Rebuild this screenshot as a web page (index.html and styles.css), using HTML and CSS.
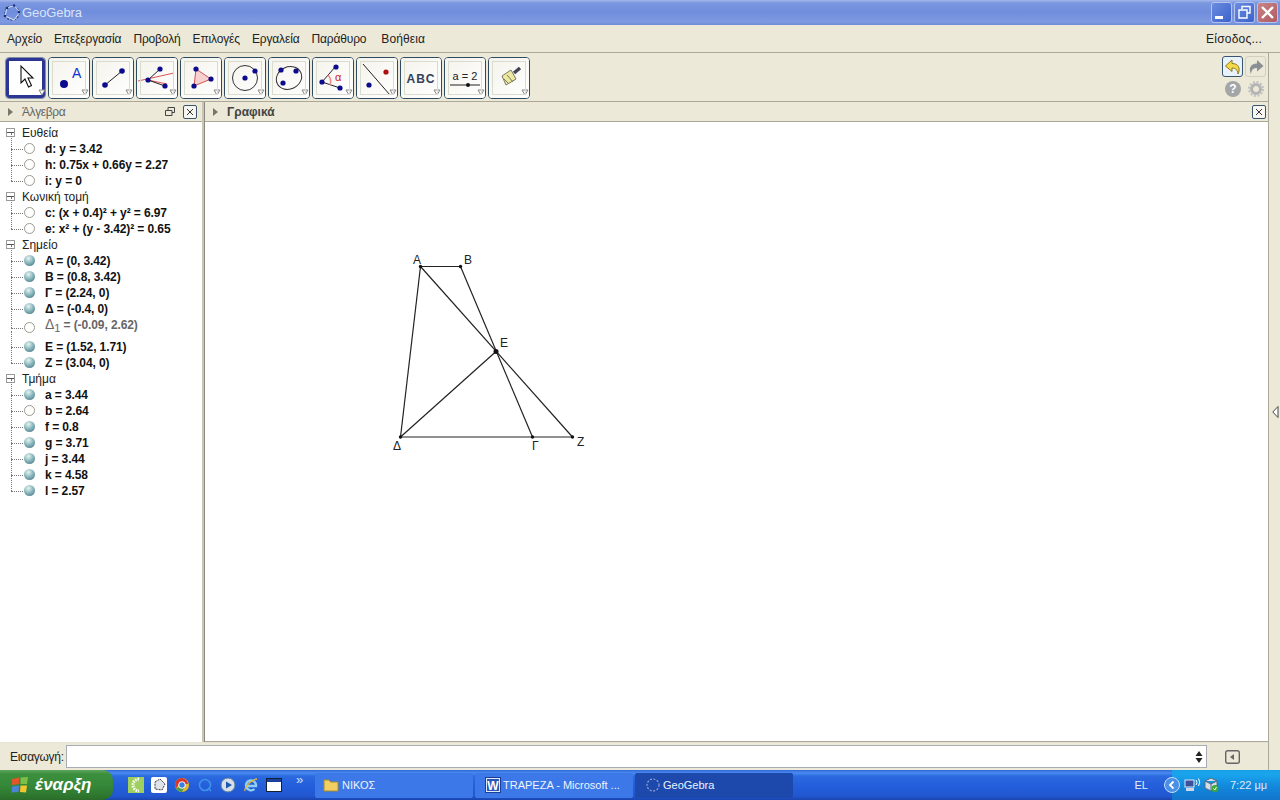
FILE: index.html
```html
<!DOCTYPE html>
<html lang="el">
<head>
<meta charset="utf-8">
<title>GeoGebra</title>
<link rel="stylesheet" href="styles.css">
</head>
<body>
<div class="window">
  <header class="titlebar">
    <svg class="applogo" width="20" height="20" viewBox="0 0 20 20"><circle cx="10" cy="10" r="7" fill="none" stroke="#2a3a80" stroke-width="1.100" stroke-dasharray="2 1.500"/><path d="M5 5 12 2.500 18 9 12 17 3 13Z" fill="none" stroke="#dfe6f7" stroke-width="1"/><circle cx="5" cy="5" r="1.300" fill="#1b2f7c"/><circle cx="12" cy="2.500" r="1.200" fill="#1b2f7c"/><circle cx="17" cy="9" r="1.300" fill="#1b2f7c"/><circle cx="3" cy="13" r="1.300" fill="#1b2f7c"/></svg>
    <span class="apptitle">GeoGebra</span>
    <div class="winbtns">
      <span class="winbtn"><svg width="21" height="21" viewBox="0 0 21 21"><rect x="4" y="14" width="8" height="3" fill="#fff"/></svg></span>
      <span class="winbtn"><svg width="21" height="21" viewBox="0 0 21 21"><path d="M8 7V4.500H16V11H13M5 8H13V16H5Z" fill="none" stroke="#fff" stroke-width="1.400"/></svg></span>
      <span class="winbtn close"><svg width="21" height="21" viewBox="0 0 21 21"><path d="M5 5 16 16M16 5 5 16" stroke="#fff" stroke-width="2.400"/></svg></span>
    </div>
  </header>
  <nav class="menubar">
    <span>Αρχείο</span><span>Επεξεργασία</span><span>Προβολή</span><span>Επιλογές</span><span>Εργαλεία</span><span>Παράθυρο</span><span class="helpmenu">Βοήθεια</span>
    <span class="signin">Είσοδος...</span>
  </nav>
  <div class="body">
    <div class="main">
      <div class="toolbar">
        <div class="tools">
          <div class="tool selected"><svg width="40" height="40" viewBox="0 0 40 40"><path d="M15 8V25L19 21 22.500 29 25.500 27.500 22 20 27 20Z" fill="#fff" stroke="#111" stroke-width="1.100"/><path d="M33 32H39L36 37Z" fill="#fff" stroke="#888"/></svg></div>
          <div class="tool"><svg width="40" height="40" viewBox="0 0 40 40"><circle cx="15" cy="26" r="4" fill="#0b0b8c"/><text x="23" y="20" class="iconletter">A</text><path d="M33 32H39L36 37Z" fill="#fff" stroke="#888"/></svg></div>
          <div class="tool"><svg width="40" height="40" viewBox="0 0 40 40"><path d="M12 27 29 13" stroke="#222"/><circle cx="12" cy="27" r="2.800" fill="#0b0b8c"/><circle cx="29" cy="13" r="2.800" fill="#0b0b8c"/><path d="M33 32H39L36 37Z" fill="#fff" stroke="#888"/></svg></div>
          <div class="tool"><svg width="40" height="40" viewBox="0 0 40 40"><path d="M1 23 37 15M11 22 30 26" stroke="#d55" /><path d="M11 22 23 11M11 22 28 28" stroke="#222"/><circle cx="23" cy="11" r="2.600" fill="#0b0b8c"/><circle cx="11" cy="22" r="2.600" fill="#0b0b8c"/><circle cx="28" cy="28" r="2.600" fill="#0b0b8c"/><path d="M33 32H39L36 37Z" fill="#fff" stroke="#888"/></svg></div>
          <div class="tool"><svg width="40" height="40" viewBox="0 0 40 40"><path d="M15 11 30 21 13 28Z" fill="#f8d0d0" stroke="#c55"/><circle cx="15" cy="11" r="2.600" fill="#0b0b8c"/><circle cx="30" cy="21" r="2.600" fill="#0b0b8c"/><circle cx="13" cy="28" r="2.600" fill="#0b0b8c"/><path d="M33 32H39L36 37Z" fill="#fff" stroke="#888"/></svg></div>
          <div class="tool"><svg width="40" height="40" viewBox="0 0 40 40"><circle cx="20" cy="20" r="12.500" fill="none" stroke="#333"/><circle cx="20" cy="20" r="2.600" fill="#0b0b8c"/><circle cx="30" cy="13" r="2.600" fill="#0b0b8c"/><path d="M33 32H39L36 37Z" fill="#fff" stroke="#888"/></svg></div>
          <div class="tool"><svg width="40" height="40" viewBox="0 0 40 40"><ellipse cx="20" cy="20" rx="13" ry="11" fill="none" stroke="#333" transform="rotate(-25 20 20)"/><circle cx="12" cy="12" r="2.600" fill="#0b0b8c"/><circle cx="27" cy="13" r="2.600" fill="#0b0b8c"/><circle cx="14" cy="25" r="2.600" fill="#0b0b8c"/><path d="M33 32H39L36 37Z" fill="#fff" stroke="#888"/></svg></div>
          <div class="tool"><svg width="40" height="40" viewBox="0 0 40 40"><path d="M9 24 23 8M9 24 27 30" stroke="#222"/><path d="M15 17A10 10 0 0 1 17 27" fill="none" stroke="#e88" stroke-width="1.500"/><circle cx="23" cy="9" r="2.600" fill="#0b0b8c"/><circle cx="9" cy="24" r="2.600" fill="#0b0b8c"/><circle cx="27" cy="30" r="2.600" fill="#0b0b8c"/><text x="22" y="23" class="iconalpha">α</text><path d="M33 32H39L36 37Z" fill="#fff" stroke="#888"/></svg></div>
          <div class="tool"><svg width="40" height="40" viewBox="0 0 40 40"><path d="M6 6 33 37" stroke="#222"/><circle cx="29" cy="14" r="2.600" fill="#b00d0d"/><circle cx="12" cy="27" r="2.600" fill="#0b0b8c"/><path d="M33 32H39L36 37Z" fill="#fff" stroke="#888"/></svg></div>
          <div class="tool"><svg width="40" height="40" viewBox="0 0 40 40"><text x="20" y="25" class="iconabc">ABC</text><path d="M33 32H39L36 37Z" fill="#fff" stroke="#888"/></svg></div>
          <div class="tool"><svg width="40" height="40" viewBox="0 0 40 40"><text x="20" y="22" class="iconeq">a = 2</text><path d="M5 27H35" stroke="#222"/><circle cx="23" cy="27" r="2" fill="#111"/><path d="M33 32H39L36 37Z" fill="#fff" stroke="#888"/></svg></div>
          <div class="tool"><svg width="40" height="40" viewBox="0 0 40 40"><path d="M13 18 22 12 27 21 17 27Z" fill="#efe9a0" stroke="#776"/><path d="M25 15 31 10" stroke="#445" stroke-width="3.500"/><path d="M15 21 20 26M18 17 24 24" stroke="#776"/><path d="M33 32H39L36 37Z" fill="#fff" stroke="#888"/></svg></div>
        </div>
        <div class="hist">
          <div class="histrow">
            <span class="histbtn active"><svg width="18" height="18" viewBox="0 0 18 18"><path d="M8 2 1.500 8 8 13.500V10C11.500 10 13.500 11.500 14 16 16.500 11 15 5.500 8 5.500Z" fill="#f5d94a" stroke="#8a7a18"/></svg></span>
            <span class="histbtn"><svg width="18" height="18" viewBox="0 0 18 18"><path d="M10 2 16.500 8 10 13.500V10C6.500 10 4.500 11.500 4 16 1.500 11 3 5.500 10 5.500Z" fill="#8a8f93"/></svg></span>
          </div>
          <div class="histrow lower">
            <svg width="16" height="16" viewBox="0 0 16 16"><circle cx="8" cy="8" r="8" fill="#a3a5a6"/><text x="8" y="12" class="helpq">?</text></svg>
            <svg width="16" height="16" viewBox="0 0 16 16"><circle cx="8" cy="8" r="4.500" fill="none" stroke="#b4b4b4" stroke-width="3"/><circle cx="8" cy="8" r="7" fill="none" stroke="#c0c0c0" stroke-width="2" stroke-dasharray="2 1.700"/></svg>
          </div>
        </div>
      </div>
      <div class="panels">
        <section class="algebra">
          <div class="panelhead">
            <span class="tri"></span><span class="algtitle">Άλγεβρα</span>
            <svg class="detach" width="10" height="10" viewBox="0 0 10 10"><path d="M3 3V.5H9.500V5.500H7M.5 3.500H7V8.500H.5Z" fill="none" stroke="#444"/></svg>
            <span class="closebox"><svg width="14" height="14" viewBox="0 0 14 14"><path d="M4 4 10 10M10 4 4 10" stroke="#333"/></svg></span>
          </div>
          <div class="tree">
            <div class="group">
              <div class="grouphead"><span class="minus"></span>Ευθεία</div>
              <div class="row"><span class="ball off"></span>d: y = 3.42</div>
              <div class="row"><span class="ball off"></span>h: 0.75x + 0.66y = 2.27</div>
              <div class="row"><span class="ball off"></span>i: y = 0</div>
            </div>
            <div class="group">
              <div class="grouphead"><span class="minus"></span>Κωνική τομή</div>
              <div class="row"><span class="ball off"></span>c: (x + 0.4)² + y² = 6.97</div>
              <div class="row"><span class="ball off"></span>e: x² + (y - 3.42)² = 0.65</div>
            </div>
            <div class="group">
              <div class="grouphead"><span class="minus"></span>Σημείο</div>
              <div class="row"><span class="ball"></span>A = (0, 3.42)</div>
              <div class="row"><span class="ball"></span>B = (0.8, 3.42)</div>
              <div class="row"><span class="ball"></span>Γ = (2.24, 0)</div>
              <div class="row"><span class="ball"></span>Δ = (-0.4, 0)</div>
              <div class="row aux"><span class="ball off"></span><span class="auxtext"><span class="auxdelta">Δ</span><sub>1</sub> = (-0.09, 2.62)</span></div>
              <div class="row"><span class="ball"></span>E = (1.52, 1.71)</div>
              <div class="row"><span class="ball"></span>Z = (3.04, 0)</div>
            </div>
            <div class="group">
              <div class="grouphead"><span class="minus"></span>Τμήμα</div>
              <div class="row"><span class="ball"></span>a = 3.44</div>
              <div class="row"><span class="ball off"></span>b = 2.64</div>
              <div class="row"><span class="ball"></span>f = 0.8</div>
              <div class="row"><span class="ball"></span>g = 3.71</div>
              <div class="row"><span class="ball"></span>j = 3.44</div>
              <div class="row"><span class="ball"></span>k = 4.58</div>
              <div class="row"><span class="ball"></span>l = 2.57</div>
            </div>
          </div>
        </section>
        <section class="graphics">
          <div class="panelhead">
            <span class="tri"></span><span class="gfxtitle">Γραφικά</span>
            <span class="closebox"><svg width="14" height="14" viewBox="0 0 14 14"><path d="M4 4 10 10M10 4 4 10" stroke="#333"/></svg></span>
          </div>
          <div class="canvas">
            <svg class="figure" width="400" height="350" viewBox="350 200 400 350">
              <g class="seg">
                <path d="M420.500 266.500H460.500"/>
                <path d="M420.500 266.500 400.500 437"/>
                <path d="M420.500 266.500 572.500 437"/>
                <path d="M460.500 266.500 532.500 437"/>
                <path d="M400.500 437 496 351.500"/>
                <path d="M400.500 437H572.500"/>
              </g>
              <g class="pts">
                <circle cx="420.500" cy="266.500" r="1.700"/>
                <circle cx="460.500" cy="266.500" r="1.700"/>
                <circle cx="532.500" cy="437" r="1.700"/>
                <circle cx="572.500" cy="437" r="1.700"/>
                <circle cx="400.500" cy="437" r="1.700"/>
                <circle cx="496" cy="351.500" r="2.500"/>
              </g>
              <g class="lbl">
                <text x="413" y="264">A</text>
                <text x="464" y="264">B</text>
                <text x="500" y="347">E</text>
                <text x="393" y="450">Δ</text>
                <text x="532" y="450">Γ</text>
                <text x="577" y="446">Z</text>
              </g>
            </svg>
          </div>
        </section>
      </div>
      <div class="inputbar">
        <label class="inputlabel">Εισαγωγή:</label>
        <div class="inputfield"><svg width="8" height="14" viewBox="0 0 8 14"><path d="M4 1 7.500 6H.5ZM4 13 .5 8H7.500Z" fill="#222"/></svg></div>
        <span class="kbbtn"><svg width="15" height="14" viewBox="0 0 15 14"><rect x=".7" y=".7" width="13.600" height="12.600" rx="2" fill="none" stroke="#666" stroke-width="1.400"/><path d="M9 4V10L5 7Z" fill="#666"/></svg></span>
      </div>
    </div>
    <aside class="strip"><svg width="7" height="12" viewBox="0 0 7 12"><path d="M6 .5V11.500L.8 6Z" fill="#fff" stroke="#444"/></svg></aside>
  </div>
  <footer class="taskbar">
    <div class="start">
      <svg width="20" height="20" viewBox="0 0 20 20"><path d="M2 4 9 2.500 9 9 2 10Z" fill="#e2562a"/><path d="M10.500 2.500 18 2 17 9 10.500 9Z" fill="#7cc04a"/><path d="M2 11.500 9 10.500 8.500 17 1.500 17.500Z" fill="#4a84d8"/><path d="M10.500 10.500 17 10.500 16 17.500 10 17Z" fill="#f3c52f"/></svg>
      <span class="starttext">έναρξη</span>
    </div>
    <div class="quick">
      <svg width="16" height="16" viewBox="0 0 16 16"><rect width="16" height="16" fill="#9fd05e"/><path d="M11 2A6 6 0 0 0 11 14" fill="none" stroke="#fff" stroke-width="3" stroke-dasharray="1.500 1"/></svg>
      <svg width="16" height="16" viewBox="0 0 16 16"><rect width="16" height="16" rx="2" fill="#fff"/><path d="M4 5 9 2 14 7 11 13 4 12Z" fill="#dfe3ea" stroke="#334" stroke-dasharray="2 1"/></svg>
      <svg width="16" height="16" viewBox="0 0 16 16"><circle cx="8" cy="8" r="7" fill="#e8b92d"/><path d="M8 1A7 7 0 0 0 2 11.500L5 7H14A7 7 0 0 0 8 1Z" fill="#d8362a"/><path d="M2 11.500A7 7 0 0 0 8 15L10 11 5 10Z" fill="#4aa04a"/><circle cx="8" cy="8" r="3.300" fill="#3b7de0" stroke="#fff"/></svg>
      <svg width="16" height="16" viewBox="0 0 16 16"><circle cx="8" cy="8" r="5.500" fill="none" stroke="#3e93e8" stroke-width="1.600"/><path d="M11 11 14 14" stroke="#3e93e8" stroke-width="1.600"/></svg>
      <svg width="16" height="16" viewBox="0 0 16 16"><circle cx="8" cy="8" r="7" fill="#d7dfe8" stroke="#5a7d9e"/><path d="M6 4.500V11.500L12 8Z" fill="#1e56b0"/></svg>
      <svg width="16" height="16" viewBox="0 0 16 16"><path d="M3 9H13A5 5 0 1 0 11.500 12" fill="none" stroke="#8fd0f2" stroke-width="2.400"/><path d="M2 14C1 11 9 2 14 2" fill="none" stroke="#e7b82e" stroke-width="1.300"/></svg>
      <svg width="16" height="16" viewBox="0 0 16 16"><rect x=".5" y="1.500" width="15" height="13" fill="#fff" stroke="#123"/><rect x="1" y="2" width="14" height="3" fill="#1b3f9c"/></svg>
    </div>
    <span class="chev">»</span>
    <div class="tasks">
      <div class="task first"><svg width="16" height="16" viewBox="0 0 16 16"><path d="M1 3H6L7.500 5H15V14H1Z" fill="#f2cf62" stroke="#a98a2c"/></svg><span>ΝΙΚΟΣ</span></div>
      <div class="task"><svg width="16" height="16" viewBox="0 0 16 16"><rect x=".5" y=".5" width="15" height="15" fill="#dfe9f8" stroke="#1c3f94"/><rect x="2" y="2" width="12" height="12" fill="#2a56b8"/><text x="8" y="12.500" class="wordw">W</text></svg><span>TRAPEZA - Microsoft ...</span></div>
      <div class="task current"><svg width="16" height="16" viewBox="0 0 16 16"><circle cx="8" cy="8" r="6" fill="none" stroke="#8ea4d8" stroke-width="1.200" stroke-dasharray="2 1.500"/></svg><span>GeoGebra</span></div>
    </div>
    <span class="lang">EL</span>
    <div class="tray">
      <span class="trayarrow"><svg width="10" height="10" viewBox="0 0 10 10"><path d="M6.500 1.500 3 5 6.500 8.500" fill="none" stroke="#fff" stroke-width="1.800"/></svg></span>
      <svg width="17" height="16" viewBox="0 0 17 16"><rect x="1" y="3" width="9" height="7" fill="#3c4f9a" stroke="#dfe6f7"/><rect x="2" y="11" width="8" height="3" fill="#cfd6e6"/><path d="M12 3A4 4 0 0 1 12 8M14.500 1.500A7 7 0 0 1 14.500 9" fill="none" stroke="#fff"/></svg>
      <svg width="17" height="16" viewBox="0 0 17 16"><path d="M2 4 8 1 14 4 8 7ZM2 4V11L8 14 14 11V4M8 7V14" fill="#d6dde6" stroke="#506a80"/><circle cx="12" cy="11.500" r="3.500" fill="#3aa83a"/><path d="M10.500 11.500 11.800 13 13.500 10" fill="none" stroke="#fff"/></svg>
      <span class="clock">7:22 μμ</span>
    </div>
  </footer>
</div>
</body>
</html>
```
FILE: styles.css
```css
* { box-sizing: border-box; }
html, body { margin: 0; padding: 0; }
body { font-family: "Liberation Sans", Arial, sans-serif; font-size: 12px; color: #111; overflow: hidden; }
.window { width: 1280px; height: 800px; display: flex; flex-direction: column; background: #ece9d8; }

.titlebar { height: 25px; flex: none; display: flex; align-items: center; padding: 0 2px; background: linear-gradient(180deg, #a3b8ea 0, #7a97e0 3px, #6f8ddc 12px, #7f9ae0 22px, #6d8bd8 25px); }
.applogo { flex: none; }
.apptitle { color: #dbe4f8; font-size: 13px; letter-spacing: -.1px; }
.winbtns { margin-left: auto; display: flex; gap: 2px; }
.winbtn { width: 21px; height: 21px; border-radius: 3px; border: 1px solid #b5c4ee; background: linear-gradient(135deg, #6a8be0, #3c63cc); display: flex; overflow: hidden; }
.winbtn svg { flex: none; margin: -1px; }
.winbtn.close { background: linear-gradient(135deg, #c98484, #b05a63); }

.menubar { height: 28px; flex: none; display: flex; align-items: center; padding: 0 18px 0 7px; gap: 12px; border-bottom: 1px solid #aca899; font-size: 12px; color: #222; letter-spacing: -.15px; }
.helpmenu { margin-left: 3px; letter-spacing: .1px; }
.signin { margin-left: auto; letter-spacing: .2px; }

.body { flex: 1; display: flex; min-height: 0; }
.main { flex: 1; min-width: 0; display: flex; flex-direction: column; }
.strip { width: 12px; flex: none; border-left: 1px solid #aca899; display: flex; align-items: center; justify-content: center; padding: 0 0 0 2px; }

.toolbar { height: 49px; flex: none; display: flex; justify-content: space-between; padding: 4px 0 0 5px; border-bottom: 1px solid #aca899; }
.tools { display: flex; gap: 2px; }
.tool { width: 42px; height: 42px; border: 1px solid #2f4b62; border-radius: 4px; background: #f5f4ee; display: flex; align-items: center; justify-content: center; overflow: hidden; }
.tool svg { flex: none; background: linear-gradient(135deg, #f4f3ec, #fff); outline: 1px solid #dcdbd0; outline-offset: -4px; }
.tool.selected { width: 41px; border: 1px solid #7f8fa8; background: #fff; box-shadow: inset 0 0 0 3px #2c3593; }
.tool.selected svg { background: none; outline: none; }
.iconletter { font: 14px "Liberation Sans", sans-serif; fill: #1030d0; }
.iconalpha { font: 11px "Liberation Sans", sans-serif; fill: #c22; }
.iconabc { font: bold 12px "Liberation Sans", sans-serif; fill: #33415c; text-anchor: middle; letter-spacing: 1px; }
.iconeq { font: 11px "Liberation Sans", sans-serif; fill: #222; text-anchor: middle; }

.hist { width: 46px; display: flex; flex-direction: column; gap: 4px; margin-top: -1px; }
.histrow { display: flex; gap: 2px; justify-content: flex-start; }
.histrow.lower { gap: 7px; padding-left: 3px; }
.histbtn { width: 21px; height: 21px; border: 1px solid #d3cfbd; border-radius: 3px; display: flex; align-items: center; justify-content: center; }
.histbtn.active { border-color: #38556e; background: #e9f1fb; }
.helpq { font: bold 12px "Liberation Sans", sans-serif; fill: #fff; text-anchor: middle; }

.panels { flex: 1; min-height: 0; display: flex; }
.panelhead { height: 20px; flex: none; display: flex; align-items: center; padding: 1px 2px 0 8px; border-bottom: 1px solid #aca899; background: #ece9d8; }
.tri { width: 0; height: 0; border-left: 5px solid #77766c; border-top: 4px solid transparent; border-bottom: 4px solid transparent; }
.algtitle { margin-left: 9px; color: #666; letter-spacing: -.4px; }
.gfxtitle { margin-left: 9px; color: #444; font-weight: bold; }
.detach { margin-left: auto; margin-right: 8px; }
.closebox { width: 14px; height: 14px; border: 1px solid #38556e; border-radius: 2px; background: #f7f6f0; display: flex; margin-right: 3px; overflow: hidden; }
.closebox svg { flex: none; margin: -1px; }
.graphics .closebox { margin-left: auto; margin-right: 0; }

.algebra { width: 204px; flex: none; display: flex; flex-direction: column; background: #fff; border-right: 2px solid #c9c7b2; }
.tree { flex: 1; background: #fff; padding-top: 3px; }
.group { position: relative; }
.grouphead { height: 16px; line-height: 16px; padding-left: 22px; position: relative; color: #222; }
.minus { position: absolute; left: 6px; top: 3px; width: 9px; height: 9px; border: 1px solid #9a9a9a; background: linear-gradient(#fff 0, #fff 3px, #555 3px, #555 4px, #fff 4px); }
.row { height: 16px; line-height: 16px; padding-left: 45px; position: relative; font-weight: bold; color: #111; white-space: nowrap; letter-spacing: -.1px; }
.row::before { content: ""; position: absolute; left: 11px; top: 8px; width: 12px; border-top: 1px dotted #777; }
.row::after { content: ""; position: absolute; left: 11px; top: -8px; height: 16px; border-left: 1px dotted #777; }
.row.aux { height: 22px; }
.row.aux::before { top: 11px; }
.row.aux::after { height: 19px; }
.auxtext { color: #666; display: block; line-height: 16px; transform: translateY(-1px); }
.auxdelta { font-size: 14px; font-weight: normal; }
.auxtext sub { font-size: 11px; line-height: 0; font-weight: normal; }
.ball { position: absolute; left: 24px; top: 2px; width: 11px; height: 11px; border-radius: 50%; background: radial-gradient(circle at 40% 30%, #e8f2f2 0, #8ab9be 45%, #3c6a7a 100%); }
.ball.off { background: #fff; border: 1.500px solid #9a9a8e; }
.aux .ball { top: 5px; }

.graphics { flex: 1; min-width: 0; display: flex; flex-direction: column; border-left: 1px solid #8a8a80; }
.canvas { flex: 1; background: #fff; overflow: hidden; position: relative; border-bottom: 1px solid #aca899; }
.figure { position: absolute; left: 145px; top: 78px; }
.seg path { stroke: #222; stroke-width: 1.200; fill: none; }
.pts circle { fill: #111; }
.lbl text { font: 12px "Liberation Sans", sans-serif; fill: #222; }

.inputbar { height: 28px; flex: none; display: flex; align-items: center; padding: 0 0 0 10px; border-top: 1px solid #e6e3d2; }
.inputlabel { width: 56px; flex: none; color: #222; letter-spacing: -.3px; }
.inputfield { width: 1141px; height: 23px; flex: none; background: #fff; border: 1px solid #a8adb5; display: flex; align-items: center; justify-content: flex-end; padding-right: 3px; }
.kbbtn { margin-left: 18px; display: flex; }

.taskbar { height: 30px; flex: none; display: flex; align-items: center; background: linear-gradient(180deg, #3168d5 0, #4a8bf2 3px, #2c6ae0 6px, #245edb 16px, #2257d0 26px, #1a45b0 30px); }
.start { width: 113px; height: 30px; flex: none; display: flex; align-items: center; gap: 5px; padding-left: 10px; border-radius: 0 10px 10px 0; background: linear-gradient(180deg, #5fa55f 0, #3c8f3c 4px, #37893a 14px, #2f7a30 24px, #2a6c2a 30px); }
.starttext { color: #fff; font: italic bold 17px "Liberation Sans", sans-serif; }
.quick { display: flex; gap: 7px; margin-left: 15px; flex: none; }
.chev { color: #cfe0fb; font-size: 13px; margin: -12px 0 0 14px; width: 19px; flex: none; }
.tasks { display: flex; gap: 2px; }
.task { width: 158px; height: 25px; display: flex; align-items: center; gap: 2px; padding-left: 10px; color: #eef3fd; background: #3d78e8; border-radius: 2px; white-space: nowrap; overflow: hidden; font-size: 11px; }
.task svg { flex: none; }
.task.first { padding-left: 8px; gap: 3px; }
.task.current { background: #1d49ac; }
.wordw { font: bold 12px "Liberation Sans", sans-serif; fill: #fff; text-anchor: middle; }
.lang { margin-left: auto; color: #e6eefc; font-size: 11px; margin-right: 24px; }
.tray { width: 108px; height: 30px; flex: none; display: flex; align-items: center; gap: 2px; background: linear-gradient(180deg, #15a0e8 0, #1aa5ee 4px, #1289dc 16px, #1275cc 30px); }
.trayarrow { width: 16px; height: 16px; border-radius: 50%; background: #4a90e6; border: 1px solid #c7dcfb; display: flex; align-items: center; justify-content: center; margin-left: -8px; margin-right: 2px; flex: none; }
.clock { color: #dfeafb; margin-left: 8px; font-size: 11px; }
```
